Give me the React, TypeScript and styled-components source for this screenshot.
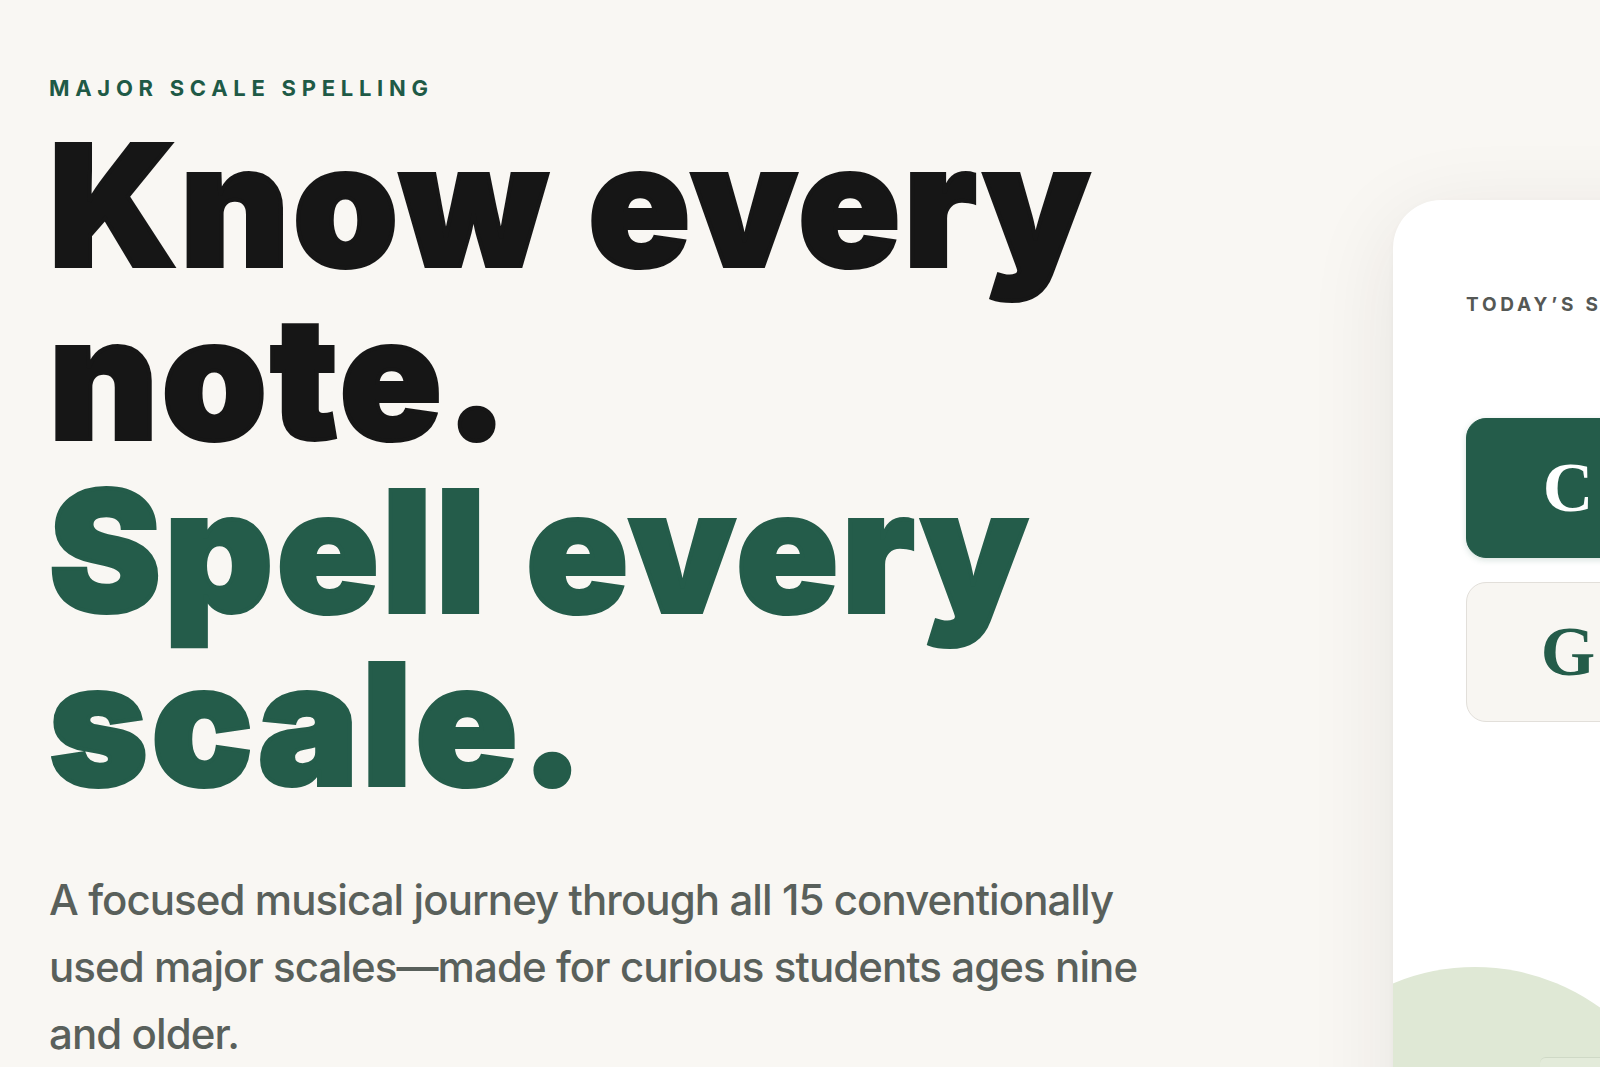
import styled, { createGlobalStyle } from 'styled-components';

const GlobalStyle = createGlobalStyle`
  html, body {
    margin: 0;
    padding: 0;
    background: #f9f7f3;
  }
  body {
    overflow: hidden;
    font-family: Inter, "Noto Sans", sans-serif;
    -webkit-font-smoothing: antialiased;
  }
`;

const scales = [
  { letter: 'C', active: true },
  { letter: 'G', active: false },
];

export default function App() {
  return (
    <>
      <GlobalStyle />
      <Page>
        <Hero>
          <Eyebrow>Major scale spelling</Eyebrow>
          <Heading>
            <Line>Know every</Line>
            <Line>note.</Line>
            <Line $accent>Spell every</Line>
            <Line $accent>scale.</Line>
          </Heading>
          <Lead>
            A focused musical journey through all 15 conventionally used major scales—made for curious students ages nine
            and older.
          </Lead>
        </Hero>
        <Aside>
          <Card>
            <CardLabel>Today’s scale</CardLabel>
            <TileList>
              {scales.map((s) => (
                <Tile key={s.letter} $active={s.active}>
                  {s.letter}
                </Tile>
              ))}
            </TileList>
            <Blob />
            <MiniCard />
          </Card>
        </Aside>
      </Page>
    </>
  );
}

const Page = styled.main`
  display: grid;
  grid-template-columns: 1344px 1fr;
  width: 1600px;
  height: 1067px;
  padding-left: 49px;
  box-sizing: border-box;
  overflow: hidden;
`;

const Hero = styled.section`
  display: flex;
  flex-direction: column;
  padding-top: 74px;
`;

const Eyebrow = styled.p`
  margin: 0;
  font-size: 22px;
  line-height: 28px;
  font-weight: 700;
  letter-spacing: 0.26em;
  text-transform: uppercase;
  color: #1f5a46;
`;

const Heading = styled.h1`
  margin: 0;
  margin-top: 17px;
  font-family: Inter, "Noto Sans", sans-serif;
  font-size: 168px;
  line-height: 173px;
  font-weight: 900;
  letter-spacing: 0.022em;
  -webkit-text-stroke: 4px currentColor;
`;

const Line = styled.span<{ $accent?: boolean }>`
  display: block;
  color: ${(p) => (p.$accent ? '#245c4a' : '#161616')};
`;

const Lead = styled.p`
  margin: 55px 0 0;
  max-width: 1140px;
  font-size: 42px;
  line-height: 67px;
  font-weight: 500;
  letter-spacing: -0.022em;
  color: #59605b;
`;

const Aside = styled.aside`
  display: flex;
  padding-top: 200px;
`;

const Card = styled.div`
  position: relative;
  flex: none;
  width: 560px;
  height: 1000px;
  background: #ffffff;
  border-radius: 48px;
  box-shadow: 0 20px 90px rgba(40, 36, 28, 0.09), 0 2px 6px rgba(40, 36, 28, 0.03);
  padding: 93px 0 0 73px;
  box-sizing: border-box;
  overflow: hidden;
`;

const CardLabel = styled.p`
  margin: 0;
  font-size: 19px;
  line-height: 24px;
  font-weight: 700;
  letter-spacing: 0.2em;
  text-transform: uppercase;
  color: #555855;
`;

const TileList = styled.div`
  display: flex;
  flex-direction: column;
  gap: 24px;
  margin-top: 101px;
`;

const Tile = styled.div<{ $active: boolean }>`
  display: flex;
  align-items: center;
  justify-content: center;
  width: 204px;
  height: 140px;
  box-sizing: border-box;
  border-radius: 20px;
  font-family: "Liberation Serif", "DejaVu Serif", serif;
  font-weight: 700;
  font-size: 70px;
  background: ${(p) => (p.$active ? '#245c4a' : '#f8f6f2')};
  color: ${(p) => (p.$active ? '#ffffff' : '#245c4a')};
  border: 1.5px solid ${(p) => (p.$active ? '#245c4a' : '#e2dfda')};
  box-shadow: ${(p) => (p.$active ? '0 2px 6px rgba(36, 92, 74, 0.18)' : 'none')};
`;

const Blob = styled.div`
  position: absolute;
  left: -131px;
  top: 767px;
  width: 426px;
  height: 426px;
  border-radius: 50%;
  background: #dfe8d5;
`;

const MiniCard = styled.div`
  position: absolute;
  left: 147px;
  top: 857px;
  width: 300px;
  height: 120px;
  border-radius: 6px;
  border-top: 1px solid #cfd9c6;
  background: #e3ebda;
`;
